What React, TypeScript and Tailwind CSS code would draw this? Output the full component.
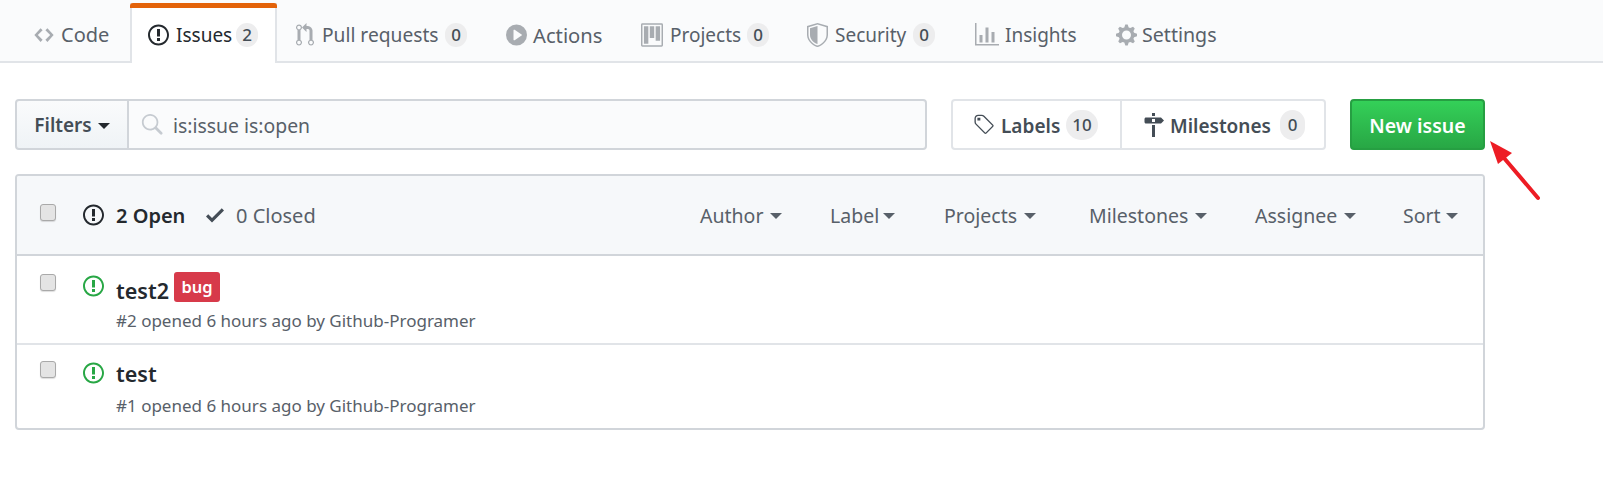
import React from "react";

const P: Record<string, { vb: string; d: string }> = {
  code: { vb: "0 0 14 16", d: "M9.5 3L8 4.5 11.5 8 8 11.5 9.5 13 14 8 9.5 3zm-5 0L0 8l4.5 5L6 11.5 2.5 8 6 4.5 4.5 3z" },
  issue: { vb: "0 0 14 16", d: "M7 2.3c3.14 0 5.7 2.56 5.7 5.7s-2.56 5.7-5.7 5.7A5.71 5.71 0 0 1 1.3 8c0-3.14 2.56-5.7 5.7-5.7zM7 1C3.14 1 0 4.14 0 8s3.14 7 7 7 7-3.14 7-7-3.14-7-7-7zm1 3H6v5h2V4zm0 6H6v2h2v-2z" },
  pr: { vb: "0 0 12 16", d: "M11 11.28V5c-.03-.78-.34-1.47-.94-2.06C9.46 2.35 8.78 2.03 8 2H7V0L4 3l3 3V4h1c.27.02.48.11.69.31.21.2.3.42.31.69v6.28A1.993 1.993 0 0 0 10 15a1.993 1.993 0 0 0 1-3.72zm-1 2.92c-.66 0-1.2-.55-1.2-1.2 0-.65.55-1.2 1.2-1.2.65 0 1.2.55 1.2 1.2 0 .65-.55 1.2-1.2 1.2zM4 3c0-1.11-.89-2-2-2a1.993 1.993 0 0 0-1 3.72v6.56A1.993 1.993 0 0 0 2 15a1.993 1.993 0 0 0 1-3.72V4.72c.59-.34 1-.98 1-1.72zm-.8 10c0 .66-.55 1.2-1.2 1.2-.65 0-1.2-.55-1.2-1.2 0-.65.55-1.2 1.2-1.2.65 0 1.2.55 1.2 1.2zM2 4.2C1.34 4.2.8 3.65.8 3c0-.65.55-1.2 1.2-1.2.65 0 1.2.55 1.2 1.2 0 .65-.55 1.2-1.2 1.2z" },
  play: { vb: "0 0 14 16", d: "M14 8A7 7 0 1 1 0 8a7 7 0 0 1 14 0zm-8.223 3.482l4.599-3.066a.5.5 0 0 0 0-.832L5.777 4.518A.5.5 0 0 0 5 4.934v6.132a.5.5 0 0 0 .777.416z" },
  project: { vb: "0 0 15 16", d: "M10 12h3V2h-3v10zm-4-2h3V2H6v8zm-4 4h3V2H2v12zm-1 1h13V1H1v14zM14 0H1a1 1 0 0 0-1 1v14a1 1 0 0 0 1 1h13a1 1 0 0 0 1-1V1a1 1 0 0 0-1-1z" },
  shield: { vb: "0 0 14 16", d: "M0 2l7-2 7 2v6.02C14 12.69 8.69 16 7 16c-1.69 0-7-3.31-7-7.98V2zm1 .75L7 1l6 1.75v5.268C13 12.104 8.449 15 7 15c-1.449 0-6-2.896-6-6.982V2.75zm1 .75L7 2v12c-1.207 0-5-2.482-5-5.985V3.5z" },
  graph: { vb: "0 0 16 16", d: "M16 14v1H0V0h1v14h15zM5 13H3V8h2v5zm4 0H7V3h2v10zm4 0h-2V6h2v7z" },
  gear: { vb: "0 0 14 16", d: "M14 8.77v-1.6l-1.94-.64-.45-1.09.88-1.84-1.13-1.13-1.81.91-1.09-.45-.69-1.92h-1.6l-.63 1.94-1.11.45-1.84-.88-1.13 1.13.91 1.81-.45 1.09L0 7.23v1.59l1.94.64.45 1.09-.88 1.84 1.13 1.13 1.81-.91 1.09.45.69 1.92h1.59l.63-1.94 1.11-.45 1.84.88 1.13-1.13-.92-1.81.47-1.09L14 8.75v.02zM7 11c-1.66 0-3-1.34-3-3s1.34-3 3-3 3 1.34 3 3-1.34 3-3 3z" },
  tag: { vb: "0 0 15 16", d: "M7.73 1.73C7.26 1.26 6.62 1 5.96 1H3.5C2.13 1 1 2.13 1 3.5v2.47c0 .66.27 1.3.73 1.77l6.06 6.06c.39.39 1.02.39 1.41 0l4.59-4.59a.996.996 0 0 0 0-1.41L7.73 1.73zM2.38 7.09c-.31-.3-.47-.7-.47-1.13V3.5c0-.88.72-1.59 1.59-1.59h2.47c.42 0 .83.16 1.13.47l6.14 6.13-4.73 4.73-6.13-6.15zM3.01 3h2v2H3V3h.01z" },
  milestone: { vb: "0 0 14 16", d: "M8 2H6V0h2v2zm4 5H2c-.55 0-1-.45-1-1V4c0-.55.45-1 1-1h10l2 2-2 2zM8 4H6v2h2V4zM6 16h2V8H6v8z" },
  check: { vb: "0 0 12 16", d: "M12 5l-8 8-4-4 1.5-1.5L4 10l6.5-6.5L12 5z" },
  search: { vb: "0 0 16 16", d: "M15.7 13.3l-3.81-3.83A5.93 5.93 0 0 0 13 6c0-3.31-2.69-6-6-6S1 2.69 1 6s2.69 6 6 6c1.3 0 2.48-.41 3.47-1.11l3.83 3.81c.19.2.45.3.7.3.25 0 .52-.09.7-.3a.996.996 0 0 0 0-1.41v.01zM7 10.7c-2.59 0-4.7-2.11-4.7-4.7 0-2.59 2.11-4.7 4.7-4.7 2.59 0 4.7 2.11 4.7 4.7 0 2.59-2.11 4.7-4.7 4.7z" },
};

function Icon({ name, className }: { name: string; className: string }) {
  const p = P[name];
  return (
    <svg viewBox={p.vb} className={className} fill="currentColor" fillRule="evenodd" aria-hidden="true">
      <path d={p.d} />
    </svg>
  );
}

function Counter({ n }: { n: string }) {
  return (
    <span className="ml-[6px] flex h-[24px] w-[22px] items-center justify-center rounded-full bg-[#ededee] text-[17px] font-medium text-[#444d56]">
      {n}
    </span>
  );
}

function BigCounter({ n, w }: { n: string; w: string }) {
  return (
    <span className={`ml-[7px] flex h-[30px] ${w} items-center justify-center rounded-full bg-[#ededee] text-[17px] font-medium text-[#444d56]`}>
      {n}
    </span>
  );
}

function Tab({ icon, iconCls, label, w, fs, n, active, gap, ml }: { icon: string; iconCls: string; label: string; w: string; fs: string; n?: string; active?: boolean; gap: string; ml?: string }) {
  return (
    <div
      className={
        active
          ? "relative ml-[2px] -mb-[2px] flex h-[60px] items-center border-x-2 border-[#e1e4e8] bg-white pb-[2px] pl-[16px] pr-[17px] pt-[6px] text-[#24292e]"
          : `${ml ?? ""} flex h-[58px] items-center px-[19px] pt-[6px] text-[#586069]`
      }
    >
      {active && <div className="absolute -left-[2px] -right-[2px] top-0 h-[5px] rounded-t-[3px] bg-[#e36209]" />}
      <Icon name={icon} className={iconCls} />
      <span className={`${w} ${gap} ${fs} whitespace-nowrap`}>{label}</span>
      {n && <Counter n={n} />}
    </div>
  );
}

function Caret({ dark }: { dark?: boolean }) {
  return <span className={`ml-[6px] inline-block h-0 w-0 border-x-[6px] border-t-[6px] border-x-transparent ${dark ? "border-t-[#24292e]" : "border-t-[#586069]"}`} />;
}

function Menu({ label, w, ml }: { label: string; w: string; ml: string }) {
  return (
    <div className={`flex items-center ${ml}`}>
      <span className={`${w} whitespace-nowrap text-[19.5px]`}>{label}</span>
      <Caret />
    </div>
  );
}

function Box() {
  return <div className="h-[17px] w-[16px] rounded-[3px] border border-[#a9a9a9] bg-[#e4e4e4] shadow-[0_1px_1px_#0002]" />;
}

function Row({ title, meta, bug, last, h, titlePt, iconPt, boxPt, titleMt, metaMt }: { title: string; meta: string; bug?: boolean; last?: boolean; h: string; titlePt: string; iconPt: string; boxPt: string; titleMt: string; metaMt: string }) {
  return (
    <div className={`flex ${h} ${last ? "" : "border-b-2 border-[#e1e4e8]"}`}>
      <div className={`ml-[23px] w-[43px] ${boxPt}`}>
        <Box />
      </div>
      <div className={`w-[33px] ${iconPt}`}>
        <Icon name="issue" className="h-[24px] w-[21px] text-[#28a745]" />
      </div>
      <div className={titlePt}>
        <div className="flex h-[30px] items-center">
          <span className={`${titleMt} w-[52px] whitespace-nowrap text-[21.5px] font-semibold leading-[30px] text-[#24292e]`}>{title}</span>
          {bug && (
            <span className="ml-[6px] flex h-[30px] w-[46px] items-center justify-center rounded-[3px] bg-[#d73a4a] text-[16.5px] font-semibold text-white">
              bug
            </span>
          )}
        </div>
        <div className={`${metaMt} whitespace-nowrap text-[17px] leading-[22px] text-[#586069]`}>{meta}</div>
      </div>
    </div>
  );
}

export default function App() {
  return (
    <div className="relative h-[491px] w-[1603px] overflow-hidden bg-white font-['Noto_Sans','Open_Sans',sans-serif] text-[19px]">
      <div className="h-[63px] border-b-2 border-[#e1e4e8] bg-[#fafbfc] pt-[3px]">
        <div className="flex h-[58px] pl-[15px]">
          <Tab icon="code" iconCls="h-[22px] w-[20px] opacity-50" gap="ml-[7px]" label="Code" w="w-[48px]" fs="text-[20px]" />
          <Tab active icon="issue" iconCls="h-[24px] w-[21px]" gap="ml-[7px]" label="Issues" w="w-[54px]" fs="text-[19px]" n="2" />
          <Tab icon="pr" iconCls="h-[24px] w-[18px] opacity-50" gap="ml-[8px]" label="Pull requests" w="w-[117px]" fs="text-[19.2px]" n="0" />
          <Tab ml="ml-[1px]" icon="play" iconCls="h-[24px] w-[21px] opacity-50" gap="ml-[6px]" label="Actions" w="w-[70px]" fs="text-[20.2px]" />
          <Tab icon="project" iconCls="h-[24px] w-[22px] opacity-50" gap="ml-[7px]" label="Projects" w="w-[71px]" fs="text-[19px]" n="0" />
          <Tab icon="shield" iconCls="h-[24px] w-[21px] opacity-50" gap="ml-[7px]" label="Security" w="w-[72px]" fs="text-[19px]" n="0" />
          <Tab ml="ml-[2px]" icon="graph" iconCls="h-[24px] w-[24px] opacity-50" gap="ml-[6px]" label="Insights" w="w-[71px]" fs="text-[19px]" />
          <Tab ml="ml-[2px]" icon="gear" iconCls="h-[24px] w-[21px] opacity-50" gap="ml-[5px]" label="Settings" w="w-[75px]" fs="text-[19.6px]" />
        </div>
      </div>

      <div className="mt-[36px] flex h-[51px] pl-[15px]">
        <div className="flex h-full w-[114px] items-center justify-center rounded-l-[4px] border-2 border-[#d1d5da] bg-gradient-to-b from-[#fafbfc] to-[#eff3f6] pt-[2px] font-semibold text-[#24292e]">
          <span className="text-[19px] text-[#444d56]">Filters</span>
          <Caret dark />
        </div>
        <div className="-ml-[2px] flex h-full w-[800px] items-center rounded-r-[4px] border-2 border-[#d1d5da] bg-[#fafbfc] pl-[11px] text-[#586069]">
          <Icon name="search" className="h-[22px] w-[23px] text-[#c6cbd1]" />
          <span className="ml-[10px] pt-[2px] text-[19.4px]">is:issue is:open</span>
        </div>
        <div className="ml-[24px] flex h-full rounded-[4px] border-2 border-[#e1e4e8] font-semibold text-[#444d56]">
          <div className="flex w-[169px] items-center border-r-2 border-[#e1e4e8] pl-[20px]">
            <Icon name="tag" className="h-[24px] w-[22px]" />
            <span className="ml-[6px] mt-[2px] w-[58px] whitespace-nowrap pt-[2px] text-[19px]">Labels</span>
            <BigCounter n="10" w="w-[32px]" />
          </div>
          <div className="flex w-[202px] items-center justify-start pl-[21px]">
            <Icon name="milestone" className="h-[24px] w-[21px]" />
            <span className="ml-[6px] mt-[2px] w-[103px] whitespace-nowrap pt-[2px] text-[19px]">Milestones</span>
            <BigCounter n="0" w="w-[25px]" />
          </div>
        </div>
        <div className="ml-[24px] flex h-full w-[135px] items-center justify-center rounded-[4px] border-2 border-[#269f42] bg-gradient-to-b from-[#34d058] to-[#28a745] pt-[2px] text-[19.5px] font-semibold text-white">
          New issue
        </div>
      </div>

      <div className="ml-[15px] mt-[24px] w-[1470px] overflow-hidden rounded-[4px] border-2 border-[#d1d5da]">
        <div className="flex h-[80px] items-center border-b-2 border-[#d1d5da] bg-[#f6f8fa] text-[#586069]">
          <div className="ml-[23px] w-[43px] -translate-y-[3px]">
            <Box />
          </div>
          <Icon name="issue" className="h-[24px] w-[21px] text-[#24292e]" />
          <span className="ml-[12px] mt-[2px] w-[69px] whitespace-nowrap text-[20px] font-semibold text-[#24292e]">2 Open</span>
          <Icon name="check" className="ml-[21px] h-[24px] w-[18px] text-[#444d56]" />
          <span className="ml-[12px] mt-[2px] whitespace-nowrap text-[20px]">0 Closed</span>
          <div className="ml-auto mt-[2px] flex items-center pr-[25px]">
            <Menu label="Author" w="w-[64px]" ml="" />
            <Menu label="Label" w="w-[47px]" ml="ml-[48px]" />
            <Menu label="Projects" w="w-[74px]" ml="ml-[49px]" />
            <Menu label="Milestones" w="w-[100px]" ml="ml-[53px]" />
            <Menu label="Assignee" w="w-[83px]" ml="ml-[48px]" />
            <Menu label="Sort" w="w-[37px]" ml="ml-[47px]" />
          </div>
        </div>
        <Row title="test2" bug meta="#2 opened 6 hours ago by Github-Programer" h="h-[89px]" titlePt="pt-[16px]" titleMt="mt-[8px]" iconPt="pt-[18px]" boxPt="pt-[18px]" metaMt="mt-[8px]" />
        <Row last title="test" meta="#1 opened 6 hours ago by Github-Programer" h="h-[83px]" titlePt="pt-[14px]" titleMt="" iconPt="pt-[16px]" boxPt="pt-[16px]" metaMt="mt-[6px]" />
      </div>

      <svg className="absolute left-[1485px] top-[136px] h-[70px] w-[60px]" viewBox="1485 136 60 70" aria-hidden="true">
        <path d="M1504 158L1538 198" stroke="#ed1c24" strokeWidth="4" strokeLinecap="round" fill="none" />
        <path d="M1490 141L1512 153 1498 164z" fill="#ed1c24" />
      </svg>
    </div>
  );
}
